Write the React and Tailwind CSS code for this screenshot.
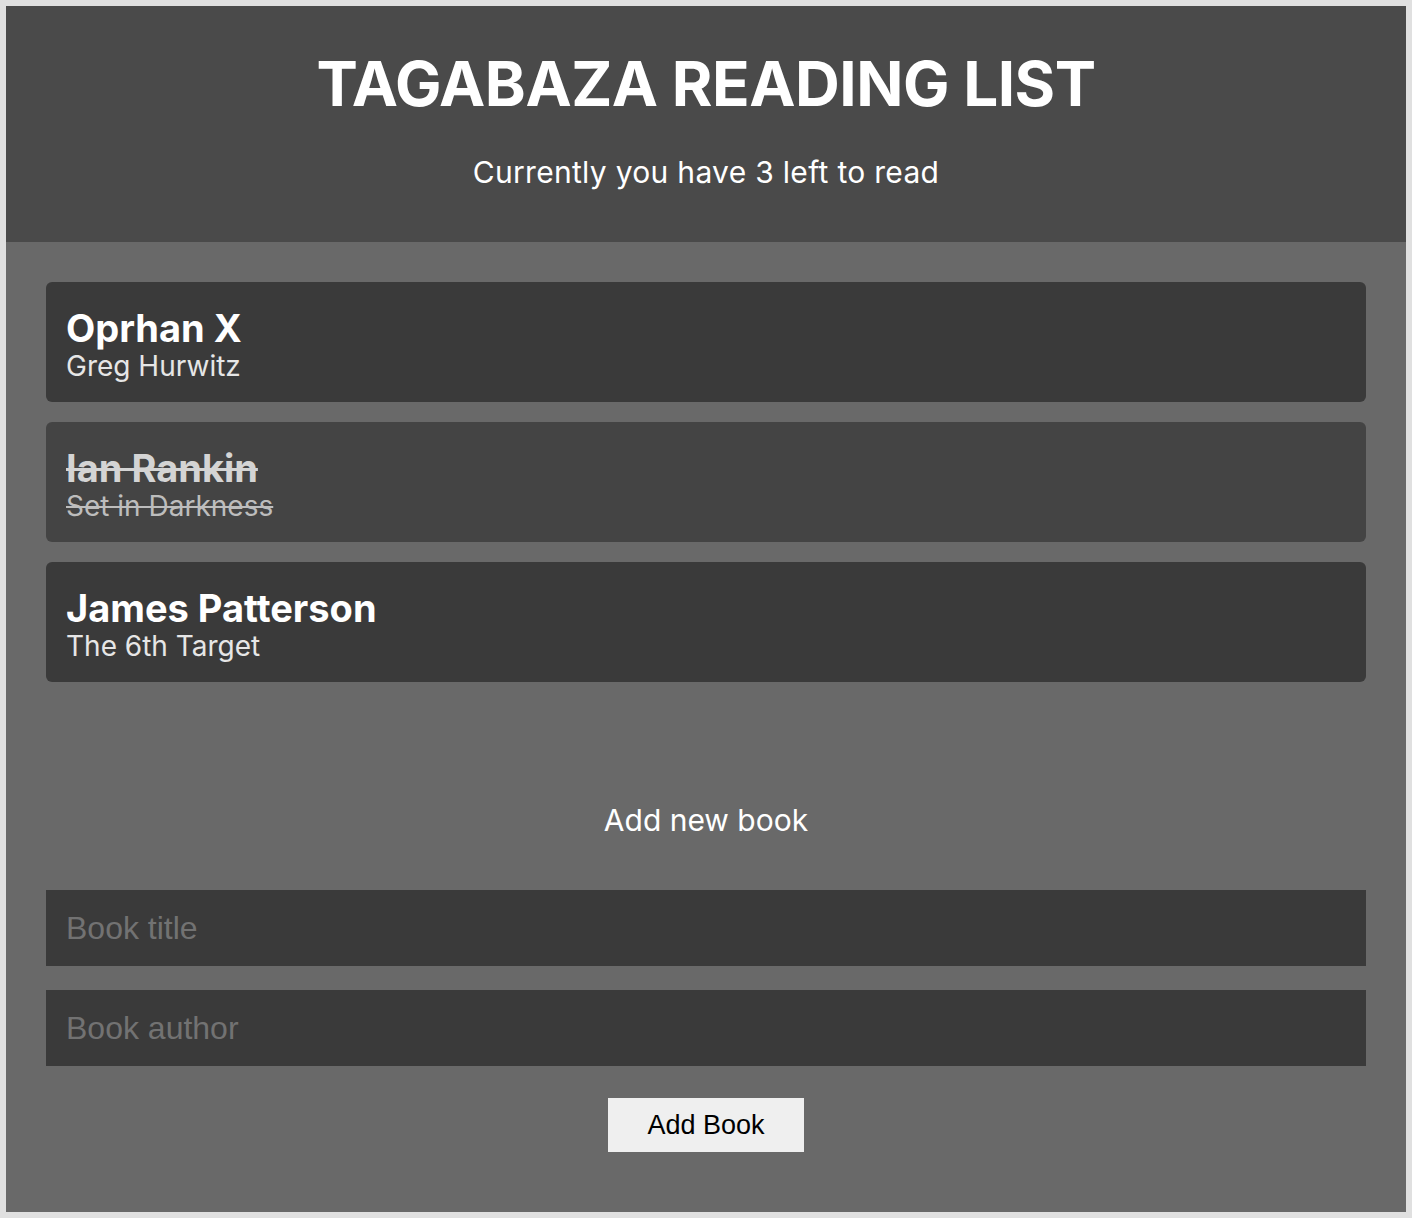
import React, { useState } from "react";

const books = [
  { title: "Oprhan X", author: "Greg Hurwitz", done: false },
  { title: "Ian Rankin", author: "Set in Darkness", done: true },
  { title: "James Patterson", author: "The 6th Target", done: false },
];

const BookCard = ({ book }) => (
  <div
    className={`rounded-md px-5 pt-[5px] h-[120px] flex flex-col justify-center ${
      book.done ? "bg-[#444444]" : "bg-[#3a3a3a]"
    }`}
  >
    <div
      className={`text-[38px] leading-[42px] font-bold ${
        book.done ? "line-through text-[#d4d4d4]" : "text-white"
      }`}
    >
      {book.title}
    </div>
    <div
      className={`text-[28px] leading-[34px] ${
        book.done ? "line-through text-[#bdbdbd]" : "text-[#e6e6e6]"
      }`}
    >
      {book.author}
    </div>
  </div>
);

const App = () => {
  const [title, setTitle] = useState("");
  const [author, setAuthor] = useState("");
  const left = books.filter((b) => !b.done).length + 1;

  return (
    <div
      className="min-h-[1218px] bg-[#e0e0e0] p-[6px]"
      style={{ fontFamily: "Inter, 'Noto Sans', sans-serif" }}
    >
      <div className="bg-[#696969] h-[1206px] flex flex-col">
        <header className="bg-[#4a4a4a] h-[236px] flex flex-col items-center pt-[40px]">
          <h1 className="text-white font-bold text-[62px] leading-[76px] tracking-[-0.5px]">
            TAGABAZA READING LIST
          </h1>
          <p className="text-white text-[30px] leading-[36px] mt-[32px] tracking-[0.3px]">
            Currently you have {left} left to read
          </p>
        </header>

        <div className="px-10 pt-10 flex flex-col gap-5">
          {books.map((b) => (
            <BookCard key={b.title} book={b} />
          ))}
        </div>

        <div className="px-10 flex flex-col">
          <h2 className="text-white text-[30px] leading-[36px] text-center mt-[120px]">
            Add new book
          </h2>
          <input
            value={title}
            onChange={(e) => setTitle(e.target.value)}
            placeholder="Book title"
            className="mt-[52px] h-[76px] bg-[#3a3a3a] px-5 text-[32px] text-white placeholder-[#727272] outline-none"
            style={{ fontFamily: "'Liberation Sans', Arial, sans-serif" }}
          />
          <input
            value={author}
            onChange={(e) => setAuthor(e.target.value)}
            placeholder="Book author"
            className="mt-6 h-[76px] bg-[#3a3a3a] px-5 text-[32px] text-white placeholder-[#727272] outline-none"
            style={{ fontFamily: "'Liberation Sans', Arial, sans-serif" }}
          />
          <div className="flex justify-center mt-8">
            <button
              className="w-[196px] h-[54px] bg-[#efefef] text-black text-[27px]"
              style={{ fontFamily: "'Liberation Sans', Arial, sans-serif" }}
            >
              Add Book
            </button>
          </div>
        </div>
      </div>
    </div>
  );
};

export default App;
